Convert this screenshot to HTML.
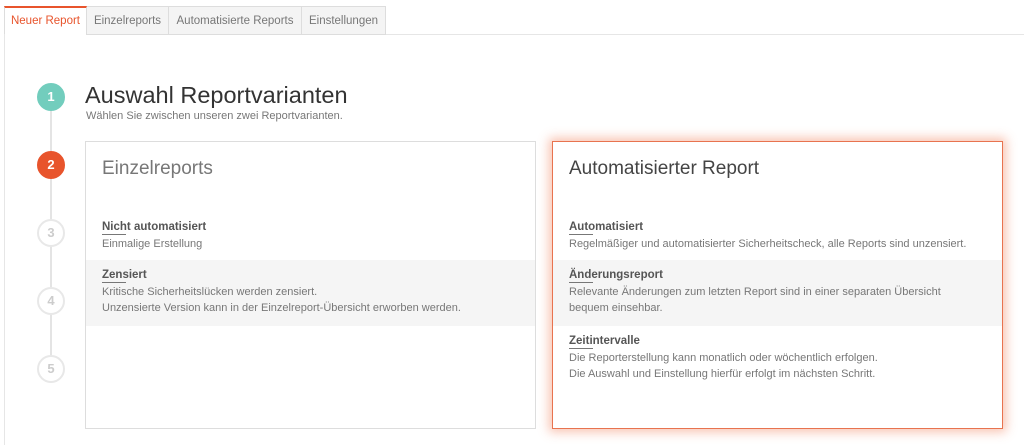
<!DOCTYPE html>
<html><head><meta charset="utf-8"><style>
*{margin:0;padding:0;box-sizing:border-box}
body{width:1024px;height:445px;background:#fff;font-family:"Liberation Sans",Arial,sans-serif;position:relative;overflow:hidden;color:#555}
.tabs{position:absolute;left:4px;top:6px;height:29px;display:flex}
.tab{height:29px;line-height:28px;font-size:11.5px;padding:0;white-space:nowrap;border:1px solid #ddd;border-left:none;background:#f4f4f4;color:#777;text-align:center}
.tab.a{background:#fff;color:#e8542c;border:1px solid #ddd;border-top:2px solid #e8542c;border-bottom:none;line-height:26px}
.topline{position:absolute;left:386px;right:0;top:34px;border-top:1px solid #e6e6e6}
.lb{position:absolute;left:4px;top:34px;bottom:0;border-left:1px solid #e6e6e6}
.vl{position:absolute;left:50px;top:110px;height:250px;border-left:2px solid #e4e4e4}
.c{position:absolute;left:37px;width:28px;height:28px;border-radius:50%;text-align:center;font-size:13px;font-weight:bold;background:#fff;border:2px solid #e8e8e8;color:#ccc;line-height:24px}
.c1{background:#72cdbd;border-color:#72cdbd;color:#fff}
.c2{background:#e8542c;border-color:#e8542c;color:#fff}
h1{position:absolute;left:85px;top:82px;font-size:23.5px;font-weight:normal;color:#333}
.sub{position:absolute;left:86px;top:110px;font-size:11px;color:#777}
.card{position:absolute;top:141px;width:451px;height:288px;border:1px solid #ddd;background:#fff}
.card.r{left:552px;border-color:#e8734f;box-shadow:0 0 10px 3px rgba(240,120,80,.45)}
.card h2{position:absolute;left:16px;top:16px;font-size:19px;font-weight:normal;color:#777}
.card.r h2{color:#444}
.it{position:absolute;left:0;right:0;padding:0 16px;font-size:11px;line-height:16px;color:#777}
.it b{display:inline-block;color:#555;font-size:11.5px;position:relative;line-height:15px;margin-bottom:1px}
.it b:after{content:"";position:absolute;left:0;bottom:0;width:24px;border-bottom:1px solid #777}
.g{background:#f5f5f5}
</style></head><body>
<div class="tabs"><div class="tab a" style="width:83px">Neuer Report</div><div class="tab" style="width:82px">Einzelreports</div><div class="tab" style="width:133px">Automatisierte Reports</div><div class="tab" style="width:84px">Einstellungen</div></div>
<div class="topline"></div><div class="lb"></div>
<div class="vl"></div>
<div class="c c1" style="top:83px">1</div>
<div class="c c2" style="top:151px">2</div>
<div class="c" style="top:219px">3</div>
<div class="c" style="top:287px">4</div>
<div class="c" style="top:355px">5</div>
<h1>Auswahl Reportvarianten</h1>
<div class="sub">Wählen Sie zwischen unseren zwei Reportvarianten.</div>
<div class="card" style="left:85px"><h2>Einzelreports</h2>
<div class="it" style="top:77px"><b>Nicht automatisiert</b><br>Einmalige Erstellung</div>
<div class="it g" style="top:118px;height:66px;padding-top:7px"><b>Zensiert</b><br>Kritische Sicherheitslücken werden zensiert.<br>Unzensierte Version kann in der Einzelreport-Übersicht erworben werden.</div>
</div>
<div class="card r"><h2>Automatisierter Report</h2>
<div class="it" style="top:77px"><b>Automatisiert</b><br>Regelmäßiger und automatisierter Sicherheitscheck, alle Reports sind unzensiert.</div>
<div class="it g" style="top:118px;height:66px;padding-top:7px"><b>Änderungsreport</b><br>Relevante Änderungen zum letzten Report sind in einer separaten Übersicht<br>bequem einsehbar.</div>
<div class="it" style="top:191px"><b>Zeitintervalle</b><br>Die Reporterstellung kann monatlich oder wöchentlich erfolgen.<br>Die Auswahl und Einstellung hierfür erfolgt im nächsten Schritt.</div>
</div>
</body></html>
